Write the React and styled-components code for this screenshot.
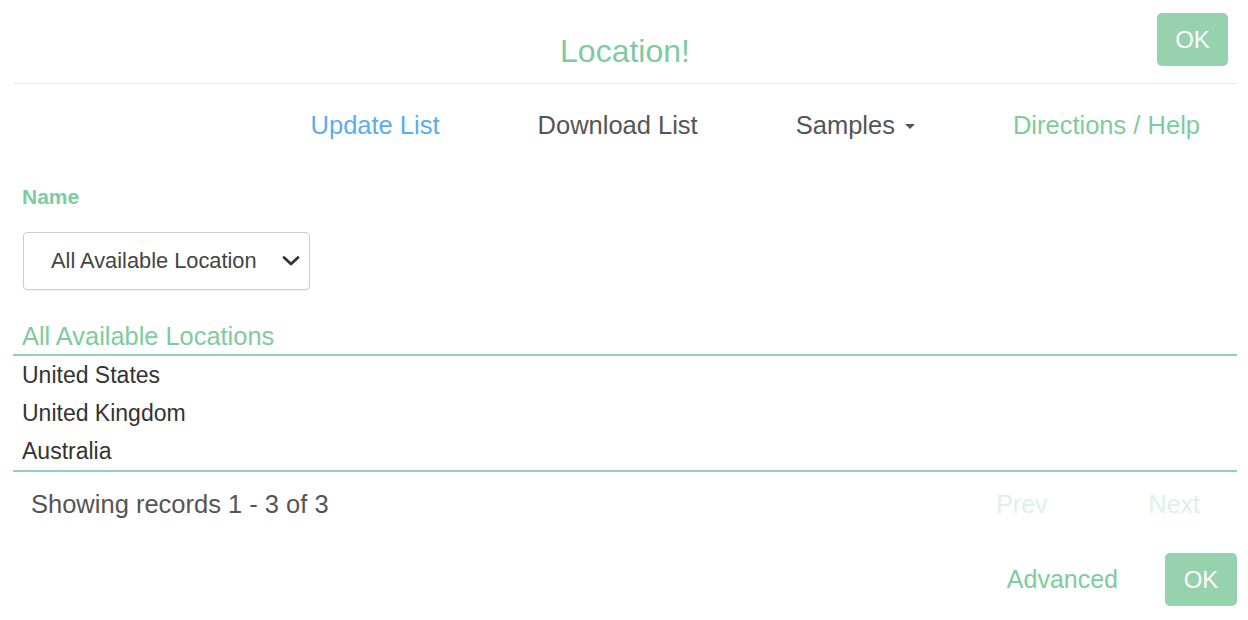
import React from "react";
import styled, { createGlobalStyle } from "styled-components";

const GlobalStyle = createGlobalStyle`
  html, body { margin: 0; padding: 0; background: #ffffff; }
  body { font-family: "Liberation Sans", Arial, Helvetica, sans-serif; color: #333; }
  * { box-sizing: border-box; }
`;

const GREEN = "#7dcc9d";
const BUTTON_GREEN = "#95d2ad";
const LINE_GREEN = "#8fd4ad";

const Page = styled.div`
  padding: 0 11px 0 13px;
  width: 1248px;
`;

const Header = styled.header`
  display: grid;
  grid-template-columns: 1fr auto 1fr;
  height: 84px;
  border-bottom: 1px solid #ebebeb;
`;

const Title = styled.h1`
  grid-column: 2;
  margin: 31px 0 0;
  font-size: 32px;
  line-height: 40px;
  font-weight: 400;
  color: ${GREEN};
`;

const OkButton = styled.button`
  justify-self: ${(p) => (p.$end ? "end" : "auto")};
  margin: ${(p) => p.$margin || "0"};
  width: ${(p) => p.$width}px;
  height: 53px;
  border: none;
  border-radius: 5px;
  background: ${BUTTON_GREEN};
  color: #ffffff;
  font-family: inherit;
  font-size: 24px;
  padding: 0;
`;

const Nav = styled.nav`
  display: flex;
  justify-content: flex-end;
  align-items: center;
  gap: 98px;
  padding: 26px 37px 0 0;
  height: 56px;
`;

const NavLink = styled.span`
  display: inline-flex;
  align-items: center;
  font-size: 25.5px;
  line-height: 30px;
  color: ${(p) => p.$color};
`;

const Caret = styled.span`
  display: inline-block;
  margin-left: 10px;
  margin-top: 2px;
  width: 0;
  height: 0;
  border-left: 5px solid transparent;
  border-right: 5px solid transparent;
  border-top: 5px solid #555;
`;

const Label = styled.div`
  margin: 45px 0 0 9px;
  font-size: 21px;
  line-height: 24px;
  font-weight: 700;
  color: ${GREEN};
`;

const SelectBox = styled.div`
  position: relative;
  margin: 23px 0 0 10px;
  width: 287px;
  height: 58px;
  border: 1px solid #cccccc;
  border-radius: 4px;
  box-shadow: 0 1px 1px rgba(0, 0, 0, 0.04);
  display: flex;
  align-items: center;
  padding-left: 27px;
  font-size: 21.8px;
  color: #444;
`;

const Chevron = styled.svg`
  position: absolute;
  right: 9px;
  top: 22px;
`;

const SectionTitle = styled.div`
  margin-top: 31px;
  padding: 0 0 3px 9px;
  font-size: 25.4px;
  line-height: 30px;
  color: ${GREEN};
  border-bottom: 2px solid ${LINE_GREEN};
`;

const List = styled.ul`
  list-style: none;
  margin: 0;
  padding: 0;
  border-bottom: 2px solid ${LINE_GREEN};
`;

const Row = styled.li`
  padding-left: 9px;
  font-size: 23px;
  line-height: 38px;
  color: #333;
`;

const Pager = styled.div`
  display: flex;
  align-items: center;
  justify-content: space-between;
  height: 64px;
  padding: 0 37px 0 18px;
`;

const Count = styled.span`
  font-size: 25.5px;
  color: #555;
`;

const PagerLinks = styled.div`
  display: flex;
  gap: 101px;
`;

const PageLink = styled.span`
  font-size: 25px;
  color: #dcf2e5;
`;

const Footer = styled.div`
  display: flex;
  justify-content: flex-end;
  align-items: center;
  gap: 47px;
  margin-top: 17px;
`;

const FooterLink = styled.span`
  font-size: 25px;
  color: ${GREEN};
`;

export default function App() {
  const rows = ["United States", "United Kingdom", "Australia"];
  return (
    <>
      <GlobalStyle />
      <Page>
        <Header>
          <Title>Location!</Title>
          <OkButton $end $width={71} $margin="13px 9px 0 0">OK</OkButton>
        </Header>
        <Nav>
          <NavLink $color="#5aacf5">Update List</NavLink>
          <NavLink $color="#555555">Download List</NavLink>
          <NavLink $color="#555555">
            Samples
            <Caret />
          </NavLink>
          <NavLink $color={GREEN}>Directions / Help</NavLink>
        </Nav>
        <Label>Name</Label>
        <SelectBox>
          All Available Location
          <Chevron width="18" height="12" viewBox="0 0 18 12">
            <path
              d="M2 2.5 L9 9 L16 2.5"
              fill="none"
              stroke="#333"
              strokeWidth="2.8"
              strokeLinecap="round"
              strokeLinejoin="round"
            />
          </Chevron>
        </SelectBox>
        <SectionTitle>All Available Locations</SectionTitle>
        <List>
          {rows.map((r) => (
            <Row key={r}>{r}</Row>
          ))}
        </List>
        <Pager>
          <Count>Showing records 1 - 3 of 3</Count>
          <PagerLinks>
            <PageLink>Prev</PageLink>
            <PageLink>Next</PageLink>
          </PagerLinks>
        </Pager>
        <Footer>
          <FooterLink>Advanced</FooterLink>
          <OkButton $width={72}>OK</OkButton>
        </Footer>
      </Page>
    </>
  );
}
